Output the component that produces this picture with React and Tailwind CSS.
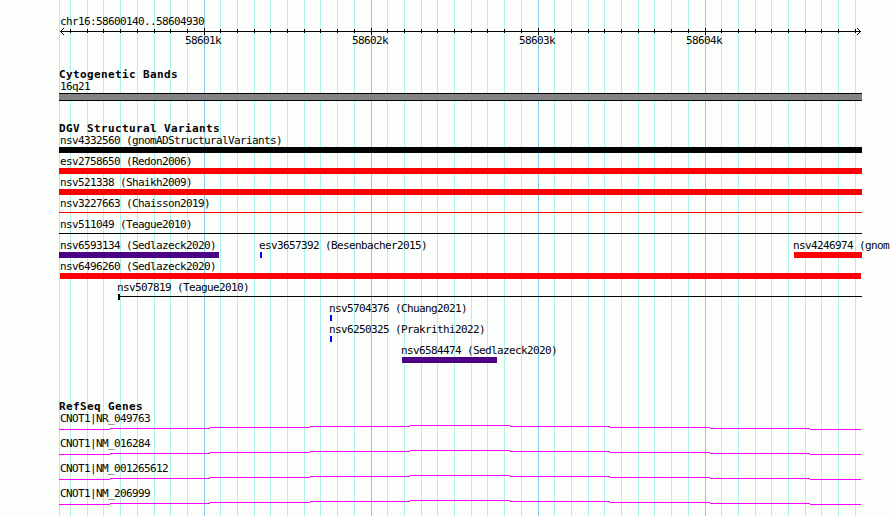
const GRID = [
  59, 70, 87, 103, 120, 137, 154, 170, 187, 204, 220, 237, 254, 270, 287, 304, 320,
  337, 354, 371, 387, 404, 421, 437, 454, 471, 487, 504, 521, 538, 554, 571, 588,
  604, 621, 638, 654, 671, 688, 705, 721, 738, 755, 771, 788, 805, 821, 838, 855,
]

const MAJOR = [
  { x: 204, label: '58601k' },
  { x: 371, label: '58602k' },
  { x: 538, label: '58603k' },
  { x: 705, label: '58604k' },
]

const isMajor = (x) => MAJOR.some(m => m.x === x)

// one entry per row, start and end are px from the left edge of the panel
const VARIANTS = [
  [{ name: 'nsv4332560 (gnomADStructuralVariants)', start: 59, end: 862, color: 'bg-[#040204]' }],
  [{ name: 'esv2758650 (Redon2006)', start: 59, end: 862, color: 'bg-[#fc0204]' }],
  [{ name: 'nsv521338 (Shaikh2009)', start: 59, end: 862, color: 'bg-[#fc0204]' }],
  [{ name: 'nsv3227663 (Chaisson2019)', start: 59, end: 862, color: 'bg-[#fc0204]', thin: true }],
  [{ name: 'nsv511049 (Teague2010)', start: 59, end: 862, color: 'bg-[#040204]', thin: true }],
  [
    { name: 'nsv6593134 (Sedlazeck2020)', start: 59, end: 219, color: 'bg-[#4c0284]' },
    { name: 'esv3657392 (Besenbacher2015)', start: 260, end: 262, color: 'bg-[#0402fc]' },
    { name: 'nsv4246974 (gnom', start: 794, end: 862, color: 'bg-[#fc0204]' },
  ],
  [{ name: 'nsv6496260 (Sedlazeck2020)', start: 60, end: 861, color: 'bg-[#fc0204]' }],
  [{ name: 'nsv507819 (Teague2010)', start: 118, end: 862, color: 'bg-[#040204]', thin: true, cap: true }],
  [{ name: 'nsv5704376 (Chuang2021)', start: 330, end: 332, color: 'bg-[#0402fc]' }],
  [{ name: 'nsv6250325 (Prakrithi2022)', start: 330, end: 332, color: 'bg-[#0402fc]' }],
  [{ name: 'nsv6584474 (Sedlazeck2020)', start: 402, end: 497, color: 'bg-[#4c0284]' }],
]

const GENES = ['CNOT1|NR_049763', 'CNOT1|NM_016284', 'CNOT1|NM_001265612', 'CNOT1|NM_206999']

// intron hat: [start, end, y]
const HAT = [
  [59, 110, 4], [110, 210, 3], [210, 310, 2], [310, 410, 1], [410, 510, 0],
  [510, 610, 1], [610, 710, 2], [710, 810, 3], [810, 861, 4],
]

function Label({ children, x = 60 }) {
  return (
    <div className="h-[13px] leading-[13px] text-[11px] tracking-[-0.622px] whitespace-pre" style={{ paddingLeft: x }}>
      {children}
    </div>
  )
}

function TrackTitle({ children }) {
  return (
    <h2 className="h-3 pl-[59px] leading-[13px] text-[11px] font-bold tracking-[0.378px] whitespace-pre">{children}</h2>
  )
}

function GridLines() {
  return (
    <svg className="absolute inset-0" width="890" height="516" shapeRendering="crispEdges">
      {GRID.map(x => (
        <rect key={x} x={x} y="0" width="1" height="516" fill={isMajor(x) ? '#84ceec' : '#acf2ec'} />
      ))}
    </svg>
  )
}

function Ruler() {
  return (
    <div className="pt-[15px]">
      <Label>chr16:58600140..58604930</Label>
      <svg className="block" width="890" height="7" shapeRendering="crispEdges" fill="#040204">
        <rect x="60" y="3" width="801" height="1" />
        {GRID.slice(1).map(x => (
          isMajor(x)
            ? <rect key={x} x={x} y="0" width="1" height="7" />
            : <rect key={x} x={x} y="1" width="1" height="4" />
        ))}
        {[1, 2, 3].map(d => (
          <g key={d}>
            <rect x={60 + d} y={3 - d} width="1" height="1" />
            <rect x={60 + d} y={3 + d} width="1" height="1" />
            <rect x={860 - d} y={3 - d} width="1" height="1" />
            <rect x={860 - d} y={3 + d} width="1" height="1" />
          </g>
        ))}
      </svg>
      <div className="grid -mt-px">
        {MAJOR.map(m => (
          <div key={m.label} className="col-start-1 row-start-1">
            <Label x={m.x - 19}>{m.label}</Label>
          </div>
        ))}
      </div>
    </div>
  )
}

function Feature({ name, start, end, color, thin, cap }) {
  return (
    <div className="col-start-1 row-start-1 h-[21px]">
      <Label x={start === 59 ? 60 : start === 60 ? 60 : start - 1}>{name}</Label>
      <div className="flex items-start h-1.5" style={{ marginLeft: start, width: end - start }}>
        {cap && <div className={`w-0.5 h-1.5 ${color}`} />}
        <div className={`flex-1 ${thin ? 'h-px mt-0.5' : 'h-1.5'} ${color}`} />
      </div>
    </div>
  )
}

export default function App() {
  return (
    <div className="relative w-[890px] h-[516px] overflow-hidden bg-[#fcfefc] text-[#040204] font-['DejaVu_Sans_Mono',monospace]">
      <GridLines />
      <main className="relative">
        <Ruler />

        <section className="pt-[21px]">
          <TrackTitle>Cytogenetic Bands</TrackTitle>
          <Label>16q21</Label>
          <div className="ml-[59px] w-[803px] h-2 border-y border-[#040204] bg-[#848284]" />
        </section>

        <section className="pt-[21px]">
          <TrackTitle>DGV Structural Variants</TrackTitle>
          {VARIANTS.map((row, i) => (
            <div key={i} className="grid">
              {row.map(f => <Feature key={f.name} {...f} />)}
            </div>
          ))}
        </section>

        <section className="pt-[35px]">
          <TrackTitle>RefSeq Genes</TrackTitle>
          {GENES.map(gene => (
            <div key={gene} className="h-[25px]">
              <Label>{gene}</Label>
              <svg className="block" width="890" height="5" shapeRendering="crispEdges" fill="#fc02fc">
                {HAT.map(([start, end, y]) => (
                  <rect key={start} x={start} y={y} width={end - start} height="1" />
                ))}
              </svg>
            </div>
          ))}
        </section>
      </main>
    </div>
  )
}
